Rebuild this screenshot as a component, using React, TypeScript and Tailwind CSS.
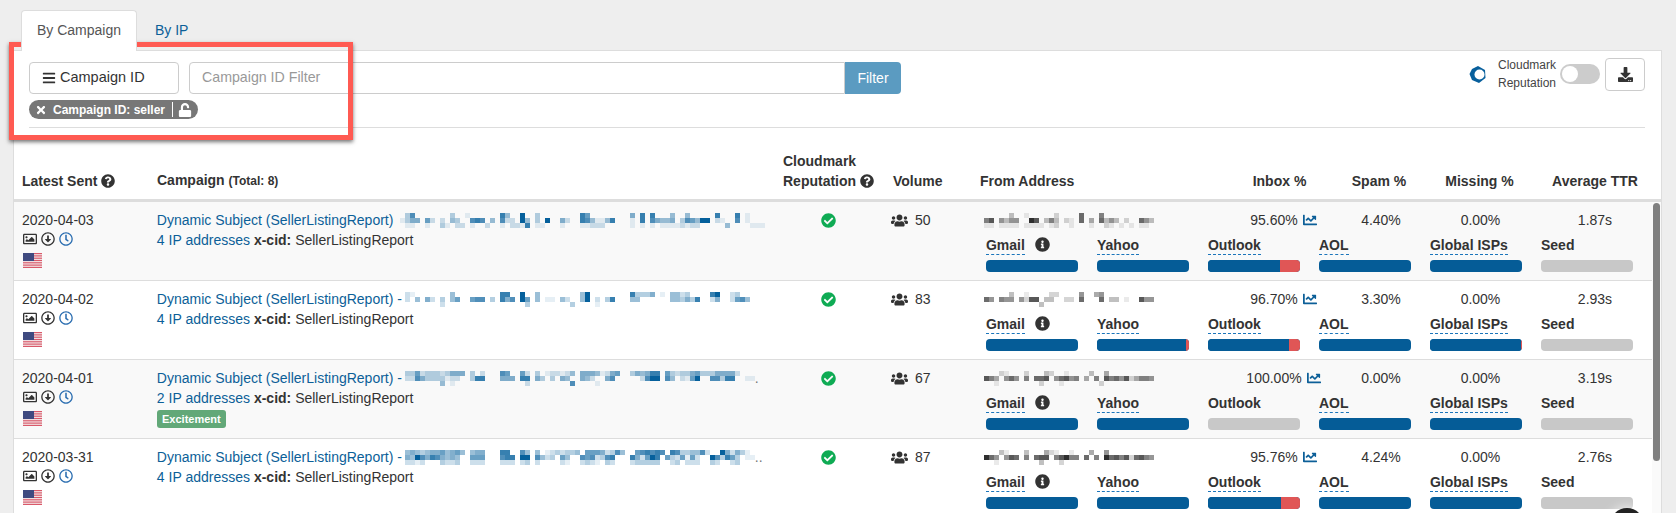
import React from "react";
import { FaBars, FaChartLine, FaCheckCircle, FaDownload, FaInfoCircle, FaQuestionCircle, FaRegArrowAltCircleDown, FaRegClock, FaRegImage, FaTimes, FaUnlock, FaUsers } from "react-icons/fa";

function Mosaic({ lines, rgb }: { lines: string[]; rgb: string }) {
  const cols = Math.max(...lines.map((l) => l.length));
  const cells: React.ReactNode[] = [];
  lines.forEach((line, y) => {
    line.split("").forEach((c, x) => {
      const v = Number(c);
      if (v > 0) cells.push(<rect key={y + "-" + x} x={x * 5} y={3 + y * 5} width={5} height={5} fill={rgb} opacity={v === 9 ? 1 : v / 10} />);
    });
  });
  return (
    <svg width={cols * 5} height={20} className="block shrink-0">
      {cells}
    </svg>
  );
}

function Flag() {
  return (
    <svg width={19} height={15} viewBox="0 0 19 15" className="block">
      <rect width={19} height={15} fill="#f4eeee" />
      {[0, 2.3, 4.6, 6.9, 9.2, 11.5, 13.8].map((y) => (
        <rect key={y} y={y} width={19} height={1.2} fill="#d9596a" />
      ))}
      <rect width={11} height={8} fill="#3f4a80" />
    </svg>
  );
}

type Seg = { blue: number; red?: number };
type Isp = { name: string; seg: Seg | null };

function Bar({ seg }: { seg: Seg | null }) {
  if (!seg) return <div className="h-[12px] w-[92px] rounded-[4px] bg-[#c8c8c8]" />;
  return (
    <div className="flex h-[12px] w-[92px] overflow-hidden rounded-[4px] bg-[#055c97]">
      <div className="h-full bg-[#055c97]" style={{ width: seg.blue + "px" }} />
      {seg.red ? <div className="h-full bg-[#e05656]" style={{ width: seg.red + "px" }} /> : null}
    </div>
  );
}

function IspCell({ isp, info }: { isp: Isp; info?: boolean }) {
  const dashed = isp.seg !== null;
  return (
    <div className="w-[111.7px]">
      <div className="flex h-[19px] items-start gap-[10px]">
        <span className={"h-[19px] text-[14px] font-bold leading-[18px] text-[#333] " + (dashed ? "border-b border-dashed border-[#1b75bb]" : "")}>{isp.name}</span>
        {info ? <FaInfoCircle className="mt-[1px] text-[15px] text-[#333]" /> : null}
      </div>
      <div className="mt-[5px]">
        <Bar seg={isp.seg} />
      </div>
    </div>
  );
}

type Row = {
  date: string;
  dash: boolean;
  subject: string[];
  mail: string[];
  dots?: string;
  ips: number;
  badge?: boolean;
  volume: number;
  inbox: string;
  spam: string;
  ttr: string;
  yahooRed: number;
  outlookRed: number | null;
  globalRed: number;
};

const rows: Row[] = [
  {
    date: "2020-04-03",
    dash: false,
    subject: [
      "00370000000300100000084009003000000008600000000508080004004000008000801000",
      "01355062020430078704072209403090052008741148000108075445037649902100701000",
      "00110010031022010020010221801100010001122200000101010111121220000040000111",
    ],
    mail: ["0000030010000020000700060000000000", "6805355009803630210704073530200753", "1101111011110120010001002101010110"],
    ips: 4,
    volume: 50,
    inbox: "95.60%",
    spam: "4.40%",
    ttr: "1.87s",
    yahooRed: 0,
    outlookRed: 20,
    globalRed: 0,
  },
  {
    date: "2020-04-02",
    dash: true,
    subject: [
      "0021000000040000000008800900400000000490000000083335010442300008900230",
      "00204052030460067703085709604011042004902038000440000004435380025002674",
      "00000000020000000000000000300000000300001",
    ],
    mail: ["0000030010000220000500450000000000", "7506550528803300220700070330100855", "0000000000030000000000000000000000"],
    ips: 4,
    volume: 83,
    inbox: "96.70%",
    spam: "3.30%",
    ttr: "2.93s",
    yahooRed: 3,
    outlookRed: 11,
    globalRed: 1,
  },
  {
    date: "2020-04-01",
    dash: true,
    subject: [
      "003362333235550302000760062030122124055541256003545880632335633355552",
      "002275333312200388000555088053030540054200570000027990740216900773880011",
      "00000000040100000000000000200000000700001",
    ],
    mail: ["0002100020003200100003004000000000", "8640575060778057856040608675824665", "0010000000020001000000020000000000"],
    dots: ".",
    ips: 2,
    badge: true,
    volume: 67,
    inbox: "100.00%",
    spam: "0.00%",
    ttr: "3.19s",
    yahooRed: 0,
    outlookRed: null,
    globalRed: 0,
  },
  {
    date: "2020-03-31",
    dash: true,
    subject: [
      "00454345564564045500088007404012323340666523740067878708733447200952531",
      "005497587545400666000788099074230640076723780008526980632616200973863011",
      "002212000322300222000222023020000210023210320002333330023022200320023",
    ],
    mail: ["0003100030004210010004005000000000", "9750587060788068966070609786827865", "0010000000030002000000000000000000"],
    dots: "..",
    ips: 4,
    volume: 87,
    inbox: "95.76%",
    spam: "4.24%",
    ttr: "2.76s",
    yahooRed: 0,
    outlookRed: 19,
    globalRed: 0,
  },
];

function TableRow({ row, odd }: { row: Row; odd: boolean }) {
  const isps: Isp[] = [
    { name: "Gmail", seg: { blue: 92 } },
    { name: "Yahoo", seg: { blue: 92 - row.yahooRed, red: row.yahooRed } },
    { name: "Outlook", seg: row.outlookRed === null ? null : { blue: 92 - row.outlookRed, red: row.outlookRed } },
    { name: "AOL", seg: { blue: 92 } },
    { name: "Global ISPs", seg: { blue: 92 - row.globalRed, red: row.globalRed } },
    { name: "Seed", seg: null },
  ];
  return (
    <div className={"flex h-[79px] shrink-0 border-b border-[#ddd] pt-[8px] text-[14px] leading-[20px] text-[#333] " + (odd ? "bg-[#f9f9f9]" : "bg-white")}>
      <div className="w-[135px] pl-[8px]">
        <div>{row.date}</div>
        <div className="-mt-[1px] flex h-[20px] items-center gap-[4px] pl-px text-[14px]">
          <FaRegImage />
          <FaRegArrowAltCircleDown />
          <FaRegClock className="text-[#2a6db0]" />
        </div>
        <div className="mt-[4px] pl-px">
          <Flag />
        </div>
      </div>
      <div className="w-[626px] pl-[8px]">
        <div className="flex h-[20px] items-center whitespace-nowrap text-[#0c5f98]">
          <span className="w-[238px] shrink-0">Dynamic Subject (SellerListingReport){row.dash ? " -" : ""}</span>
          <Mosaic lines={row.subject} rgb="#05609c" />
          {row.dots ? <span className="text-[#777]">{row.dots}</span> : null}
        </div>
        <div>
          <span className="text-[#0c5f98]">{row.ips} IP addresses</span> <b>x-cid:</b> SellerListingReport
        </div>
        {row.badge ? <div className="mt-[2px] flex h-[18px] w-[69px] items-center justify-center rounded-[3px] bg-[#62a878] text-[11px] font-bold text-white">Excitement</div> : null}
      </div>
      <div className="flex w-[106px] justify-center pl-[2px] pt-[3px]">
        <FaCheckCircle className="text-[15px] text-[#0fab54]" />
      </div>
      <div className="flex h-[20px] w-[91px] items-center gap-[7px] pl-[11px]">
        <FaUsers className="text-[17px]" />
        <span>{row.volume}</span>
      </div>
      <div className="w-[681px]">
        <div className="flex h-[20px]">
          <div className="w-[253px] pl-[13px]">
            <Mosaic lines={row.mail} rgb="#2e2e2e" />
          </div>
          <div className="flex w-[109px] items-center justify-center gap-[5px] pl-[10px]">
            <span>{row.inbox}</span>
            <FaChartLine className="text-[14px] text-[#0c5f98]" />
          </div>
          <div className="w-[92px] pl-[4px] text-center">{row.spam}</div>
          <div className="w-[107px] pl-[4px] text-center">0.00%</div>
          <div className="w-[120px] pl-[6px] text-center">{row.ttr}</div>
        </div>
        <div className="mt-[6px] flex pl-[15px]">
          {isps.map((isp) => (
            <IspCell key={isp.name} isp={isp} info={isp.name === "Gmail"} />
          ))}
        </div>
      </div>
    </div>
  );
}

export default function App() {
  return (
    <div className="relative flex h-[513px] flex-col overflow-hidden bg-[#eeeeee] pl-[13px] pr-[14px] pt-[10px] font-['Liberation_Sans',sans-serif] text-[14px] text-[#333]">
      <div className="flex h-[40px] pl-[8px]">
        <div className="relative z-10 flex h-[41px] w-[116px] items-center justify-center rounded-t-[4px] border border-b-0 border-[#ddd] bg-white pb-[2px] text-[#555]">By Campaign</div>
        <div className="flex h-[40px] items-center pl-[18px] text-[#0c5f98]">By IP</div>
      </div>
      <div className="flex min-h-0 flex-1 flex-col border-x border-t border-[#ddd] bg-white">
        <div className="pl-[15px] pr-[16px] pt-[11px]">
          <div className="flex items-start justify-between">
            <div className="flex">
              <div className="flex h-[32px] w-[150px] items-center gap-[4px] rounded-[4px] border border-[#ccc] pl-[12px] text-[14.5px]">
                <FaBars className="text-[14px]" />
                <span>Campaign ID</span>
              </div>
              <div className="ml-[10px] flex h-[32px] w-[656px] items-center rounded-l-[4px] border border-[#ccc] pl-[12px] text-[14.2px] text-[#999]">Campaign ID Filter</div>
              <div className="flex h-[32px] w-[56px] items-center justify-center rounded-r-[4px] bg-[#5b9bc1] text-white">Filter</div>
            </div>
            <div className="-mt-[6px] flex items-center">
              <svg width={17} height={19} viewBox="0 0 17 19" className="mr-[12px]">
                <path d="M9 1 L16 5 L16.5 13 L10 18 L3 15 L0.5 9 L3 4 Z" fill="#075f9c" />
                <circle cx={10.5} cy={9.5} r={5} fill="#ffffff" />
              </svg>
              <div className="w-[58px] text-right text-[12px] leading-[18px] text-[#444]">
                Cloudmark<br />Reputation
              </div>
              <div className="ml-[4px] flex h-[20px] w-[40px] items-center rounded-full bg-[#cccccc] pl-[2px]">
                <div className="h-[16px] w-[16px] rounded-full bg-white" />
              </div>
              <div className="ml-[5px] flex h-[33px] w-[40px] items-center justify-center rounded-[4px] border border-[#ccc]">
                <FaDownload className="text-[15px] text-[#333]" />
              </div>
            </div>
          </div>
          <div className="mt-[6px] flex h-[19px] w-[169px] items-center rounded-full bg-[#777] pl-[6px] text-[12px] font-bold text-white">
            <FaTimes className="text-[12px]" />
            <span className="ml-[6px]">Campaign ID: seller</span>
            <span className="ml-[7px] h-[15px] w-px bg-white" />
            <FaUnlock className="ml-[5px] text-[14px]" />
          </div>
          <div className="mt-[8px] border-t border-[#ddd]" />
        </div>
        <div className="mt-[26px] flex h-[48px] shrink-0 items-end border-b-[3px] border-[#ddd] pb-[8px] text-[14px] font-bold leading-[20px] text-[#333]">
          <div className="flex w-[135px] items-center gap-[4px] pl-[8px]">
            Latest Sent <FaQuestionCircle className="text-[14px]" />
          </div>
          <div className="w-[626px] pl-[8px]">
            Campaign <span className="text-[12px]">(Total: 8)</span>
          </div>
          <div className="w-[106px] pl-[8px]">
            Cloudmark
            <div className="flex items-center gap-[4px]">
              Reputation <FaQuestionCircle className="text-[14px]" />
            </div>
          </div>
          <div className="w-[91px] pl-[12px]">Volume</div>
          <div className="w-[253px] pl-[8px]">From Address</div>
          <div className="w-[109px] text-center">Inbox %</div>
          <div className="w-[92px] pr-[2px] text-center">Spam %</div>
          <div className="w-[107px] text-center">Missing %</div>
          <div className="w-[120px] pl-[4px] text-center">Average TTR</div>
        </div>
        <div className="flex min-h-0 flex-1 overflow-hidden">
          <div className="flex min-w-0 flex-1 flex-col">
            {rows.map((row, i) => (
              <TableRow key={row.date} row={row} odd={i % 2 === 0} />
            ))}
          </div>
          <div className="w-[9px] shrink-0 bg-[#fafafa] pl-px">
            <div className="mt-px h-[258px] w-[7px] rounded-full bg-[#808080]" />
          </div>
        </div>
      </div>
      <div className="absolute left-[9px] top-[42px] h-[98px] w-[344px] border-[5px] border-[#ff5a52] shadow-[0_2px_4px_rgba(0,0,0,0.55)]" />
      <div className="absolute left-[1610px] top-[508px] h-[34px] w-[34px] rounded-full bg-[#222] shadow-[0_0_12px_rgba(255,255,255,0.9)]" />
    </div>
  );
}
